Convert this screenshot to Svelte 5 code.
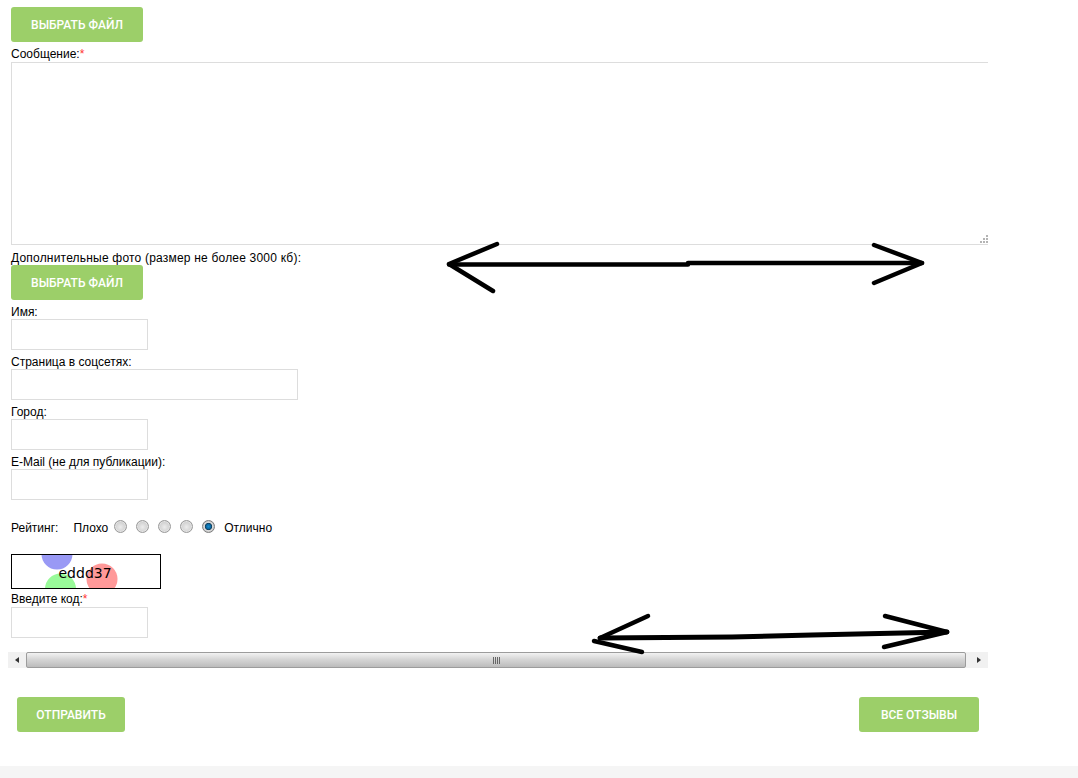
<script>
  // form fields, in page order
  const fields = [
    { label: 'Имя:', wide: false },
    { label: 'Страница в соцсетях:', wide: true },
    { label: 'Город:', wide: false },
    { label: 'E-Mail (не для публикации):', wide: false }
  ]
  const ratings = [1, 2, 3, 4, 5]
  let rating = 5
</script>

<div class="page">
  <div class="scroller">
    <form class="form">
      <button type="button" class="btn pick first">Выбрать файл</button>
      <label class="label top" for="msg">Сообщение:<span class="req">*</span></label>
      <div class="area-wrap">
        <textarea id="msg" class="area"></textarea>
        <svg class="grip" width="9" height="10" viewBox="0 0 9 10">
          <g fill="#b4b4b4">
            <rect x="6" y="0" width="2" height="2" />
            <rect x="3" y="3" width="2" height="2" />
            <rect x="6" y="3" width="2" height="2" />
            <rect x="0" y="6" width="2" height="2" />
            <rect x="3" y="6" width="2" height="2" />
            <rect x="6" y="6" width="2" height="2" />
          </g>
        </svg>
      </div>
      <div class="label extra">Дополнительные фото (размер не более 3000 кб):</div>
      <button type="button" class="btn pick">Выбрать файл</button>

      {#each fields as f}
        <div class="label">{f.label}</div>
        <input class="input" class:wide={f.wide} type="text" />
      {/each}

      <div class="rating">
        <span class="rating-title">Рейтинг:</span>
        <span>Плохо</span>
        <span class="radios">
          {#each ratings as r}
            <input type="radio" name="rating" class="radio" value={r} bind:group={rating} />
          {/each}
        </span>
        <span>Отлично</span>
      </div>

      <svg class="captcha" width="150" height="35" viewBox="0 0 150 35">
        <rect width="150" height="35" fill="#fff" />
        <circle cx="46" cy="0" r="15.5" fill="#9999f5" />
        <circle cx="49.500" cy="35" r="15.5" fill="#99fa99" />
        <circle cx="91" cy="25" r="15.5" fill="#ff9999" />
        <text x="47.5" y="23.500" class="captcha-text">eddd37</text>
        <rect x="0.5" y="0.5" width="149" height="34" fill="none" stroke="#000" />
      </svg>

      <label class="label code" for="code">Введите код:<span class="req">*</span></label>
      <input id="code" class="input" type="text" />
    </form>
  </div>

  <div class="scrollbar">
    <span class="sb-btn"><i class="tri left"></i></span>
    <div class="thumb">
      <span class="lines"><i></i><i></i><i></i><i></i></span>
    </div>
    <span class="sb-btn"><i class="tri right"></i></span>
  </div>

  <div class="actions">
    <button type="button" class="btn send">Отправить</button>
    <button type="button" class="btn all">Все отзывы</button>
  </div>

  <div class="strip"></div>

  <!-- hand drawn arrows on top of the screenshot -->
  <svg class="arrows" width="1078" height="778" viewBox="0 0 1078 778">
    <g fill="none" stroke="#000" stroke-width="4.5" stroke-linecap="round" stroke-linejoin="round">
      <path d="M497 244 L449 264 L493 291" />
      <path d="M449 264.500 L688 264.500 L688 263 L922 263" />
      <path d="M874 245 L922 263 L874 283" />
      <path d="M648 616 L600 638" />
      <path d="M594 641 L642 652" />
      <path d="M600 638 L732 637 L812 635 L947 632" stroke-width="5" />
      <path d="M885 616 L947 632 L884 647" />
    </g>
  </svg>
</div>

<style>
  :global(body) {
    background: #fff;
  }

  .page {
    position: relative;
    height: 778px;
    overflow: hidden;
    font-family: "Liberation Sans", Arial, sans-serif;
    font-size: 12px;
    line-height: 14px;
    color: #000;
  }

  .scroller {
    width: 980px;
    margin-left: 8px;
    padding-top: 7px;
    padding-bottom: 14px;
    overflow: hidden;
  }

  .form {
    display: flex;
    flex-direction: column;
    align-items: flex-start;
    padding-left: 3px;
  }

  .btn {
    height: 35px;
    padding: 0;
    border: 0;
    border-radius: 3px;
    background: #9ccf69;
    color: #fff;
    font-family: Roboto, sans-serif;
    font-size: 12px;
    font-weight: 500;
    text-transform: uppercase;
    display: block;
  }

  .pick {
    width: 132px;
  }

  .first {
    margin-bottom: 1px;
  }

  .label {
    display: block;
    height: 14px;
    padding: 5px 0 0;
  }

  .top {
    padding: 4px 0 1px;
  }

  .req {
    color: #f33;
  }

  .area-wrap {
    position: relative;
    width: 978px;
    height: 183px;
    margin-bottom: 1px;
  }

  .area {
    display: block;
    width: 100%;
    height: 100%;
    box-sizing: border-box;
    padding: 0;
    border: 1px solid #ddd;
    background: #fff;
    resize: none;
    outline: none;
  }

  .grip {
    position: absolute;
    right: 0;
    bottom: 0;
  }

  .extra {
    padding: 5px 0 0;
    letter-spacing: 0.2px;
  }

  .input {
    display: block;
    width: 137px;
    height: 31px;
    box-sizing: border-box;
    padding: 0;
    border: 1px solid #ddd;
    background: #fff;
    outline: none;
  }

  .wide {
    width: 287px;
  }

  .rating {
    display: flex;
    align-items: center;
    height: 14px;
    margin: 21px 0 19px;
  }

  .rating-title {
    margin-right: 15px;
  }

  .radios {
    display: flex;
    gap: 9px;
    margin: -3px 9px 0 6px;
  }

  .radio {
    appearance: none;
    display: block;
    width: 13px;
    height: 13px;
    margin: 0;
    border: 1px solid #9a9a9a;
    border-radius: 50%;
    box-sizing: border-box;
    background: radial-gradient(circle at 50% 55%, #ececec 0, #d6d6d6 50%, #b4b4b4 100%);
    box-shadow: inset 0 0 0 1px #e4e4e4;
  }

  .radio:checked {
    background: radial-gradient(circle at 50% 50%, #1a8ccc 0, #0a6aa5 28%, #123f5c 42%, #dcdcdc 52%, #a8a8a8 100%);
    border-color: #7d7d7d;
    box-shadow: none;
  }

  .captcha {
    display: block;
  }

  .captcha-text {
    font-family: "DejaVu Sans", sans-serif;
    font-size: 14px;
    fill: #000;
  }

  .code {
    padding: 3px 0 1px;
  }

  .scrollbar {
    display: flex;
    align-items: stretch;
    width: 980px;
    height: 16px;
    margin-left: 8px;
    background: #f1f1f1;
  }

  .sb-btn {
    display: flex;
    align-items: center;
    justify-content: center;
    width: 18px;
    flex: none;
  }

  .tri {
    display: block;
    width: 0;
    height: 0;
    border-top: 3.500px solid transparent;
    border-bottom: 3.500px solid transparent;
  }

  .tri.left {
    border-right: 4px solid #333;
  }

  .tri.right {
    border-left: 4px solid #333;
  }

  .thumb {
    flex: 1;
    display: flex;
    align-items: center;
    justify-content: center;
    margin-right: 4px;
    border: 1px solid #9c9c9c;
    border-radius: 2px;
    box-sizing: border-box;
    background: linear-gradient(#f2f2f2, #d6d6d6 45%, #bcbcbc);
  }

  .lines {
    display: flex;
    gap: 1px;
  }

  .lines i {
    display: block;
    width: 1px;
    height: 7px;
    background: #666;
  }

  .actions {
    display: flex;
    justify-content: space-between;
    padding: 29px 99px 0 17px;
  }

  .send {
    width: 108px;
  }

  .all {
    width: 120px;
  }

  .strip {
    height: 12px;
    margin-top: 34px;
    background: #f5f5f5;
  }

  .arrows {
    position: absolute;
    left: 0;
    top: 0;
    pointer-events: none;
  }
</style>
